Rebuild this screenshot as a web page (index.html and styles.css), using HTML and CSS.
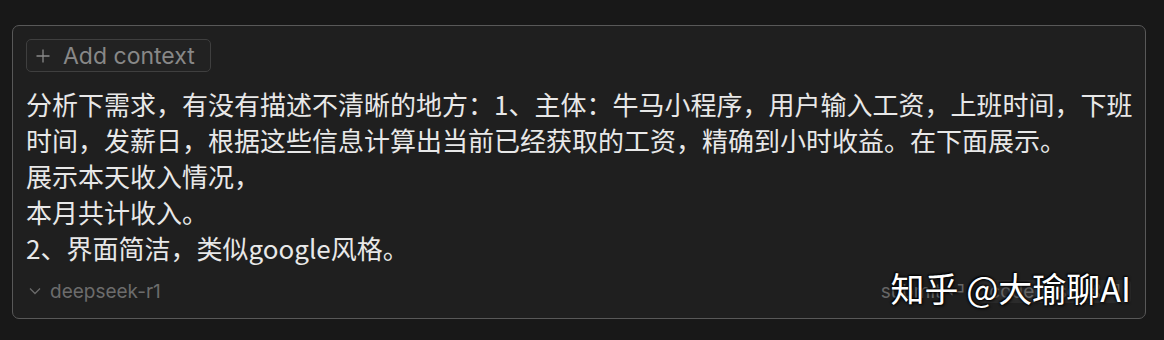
FILE: index.html
```html
<!DOCTYPE html>
<html lang="zh">
<head>
<meta charset="utf-8">
<link rel="stylesheet" href="styles.css">
</head>
<body>
<div class="box">
  <div class="ctx-row">
    <button class="ctx-btn">
      <svg class="plus" width="14" height="14" viewBox="0 0 14 14"><path d="M7 0.5V13.5M0.5 7H13.5" stroke="#8a8a8a" stroke-width="1.3" fill="none"/></svg>
      <span>Add context</span>
    </button>
  </div>
  <div class="prompt">分析下需求，有没有描述不清晰的地方：1、主体：牛马小程序，用户输入工资，上班时间，下班<br>时间，发薪日，根据这些信息计算出当前已经获取的工资，精确到小时收益。在下面展示。<br>展示本天收入情况，<br>本月共计收入。<br>2、界面简洁，类似google风格。</div>
  <div class="footer">
    <div class="model">
      <svg class="chev" width="12" height="8" viewBox="0 0 12 8"><path d="M1 1.5L6 6.5L11 1.5" stroke="#6a6a6a" stroke-width="1.3" fill="none"/></svg>
      <span>deepseek-r1</span>
    </div>
    <div class="actions">
      <span class="submit">submit ⏎</span>
      <span class="pill">codebase ⌘⏎</span>
    </div>
  </div>
  <div class="watermark">知乎 @大瑜聊AI</div>
</div>
</body>
</html>
```
FILE: styles.css
```css
html, body {
  margin: 0;
  padding: 0;
  background: #181818;
}
body {
  padding: 25px 18px 21px 12px;
  font-family: Inter, "Noto Sans", "Noto Sans CJK SC", sans-serif;
}
.box {
  position: relative;
  box-sizing: border-box;
  width: 1134px;
  height: 294px;
  background: #1f1f1f;
  border: 1.5px solid #585858;
  border-radius: 7px;
  padding: 13px 12px 0 13px;
  display: flex;
  flex-direction: column;
}
.ctx-row {
  display: flex;
}
.ctx-btn {
  box-sizing: border-box;
  height: 33px;
  width: 185px;
  display: flex;
  align-items: center;
  gap: 13px;
  padding: 1px 0 0 9px;
  background: #222;
  border: 1.5px solid #3f3f3f;
  border-radius: 5px;
  color: #888;
  font-family: Inter, "Noto Sans", sans-serif;
  font-size: 23px;
  line-height: 1;
}
.prompt {
  margin-top: 14px;
  font-family: "Noto Sans CJK SC", sans-serif;
  font-size: 26px;
  line-height: 36px;
  color: #e8e8e8;
  white-space: nowrap;
}
.footer {
  margin-top: 13px;
  height: 24px;
  display: flex;
  align-items: center;
  justify-content: space-between;
}
.model {
  display: flex;
  align-items: center;
  gap: 9px;
  padding-left: 3px;
  color: #6c6c6c;
  font-size: 19px;
}
.actions {
  display: flex;
  align-items: center;
  gap: 14px;
  font-size: 19px;
  color: #666;
}
.pill {
  background: #2b2b2b;
  border-radius: 4px;
  padding: 0 10px;
  margin-right: 2px;
}
.watermark {
  position: absolute;
  right: 14px;
  bottom: 10px;
  font-family: "Noto Sans CJK SC", sans-serif;
  font-size: 34px;
  line-height: 40px;
  color: #fff;
  text-shadow: 0 0 2px #000, 1px 1px 3px #000, -1px -1px 2px #000;
}
```
